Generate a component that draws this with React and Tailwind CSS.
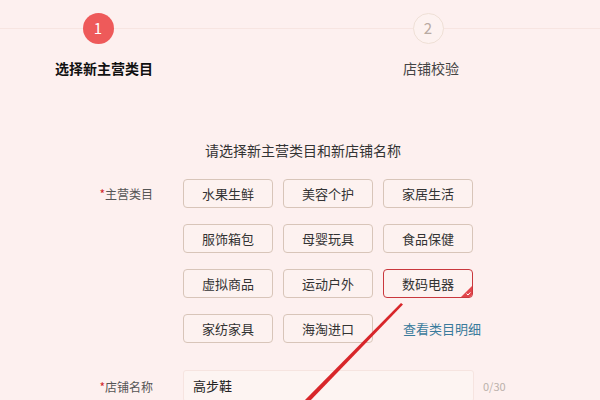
const categories = [
  "水果生鲜",
  "美容个护",
  "家居生活",
  "服饰箱包",
  "母婴玩具",
  "食品保健",
  "虚拟商品",
  "运动户外",
  "数码电器",
  "家纺家具",
  "海淘进口",
];

const CategoryButton = ({ label, selected }) => (
  <div
    className={
      selected
        ? "relative flex h-[29px] items-center justify-center rounded-[4px] border border-[#c9383d] bg-[#fdf2f0] text-[13px] text-[#333]"
        : "relative flex h-[29px] items-center justify-center rounded-[4px] border border-[#d8c5b9] bg-[#fdf2f0] text-[13px] text-[#333]"
    }
  >
    {label}
    {selected ? (
      <svg className="absolute bottom-0 right-0" width="11" height="11" viewBox="0 0 11 11">
        <path d="M11 0 L11 8 Q11 11 8 11 L0 11 Z" fill="#e2454b" />
        <path d="M5.5 7.6 L7 9 L9.4 6.4" stroke="#fff" strokeWidth="1" fill="none" />
      </svg>
    ) : null}
  </div>
);

const FieldLabel = ({ children }) => (
  <div className="w-[153px] shrink-0 text-right text-[12px] leading-[29px] text-[#555]">
    <span className="text-[#d0262c]">*</span>
    {children}
  </div>
);

export default function App() {
  return (
    <div
      className="relative h-[400px] w-[600px] overflow-hidden bg-[#fdf0ef]"
      style={{ fontFamily: '"Noto Sans CJK SC", "Noto Sans", sans-serif' }}
    >
      {/* steps */}
      <div className="relative">
        <div className="absolute left-0 right-0 top-[28px] h-px bg-[#f7e5e1]" />
        <div className="relative flex">
          <div className="ml-[38px] flex w-[120px] flex-col items-center pt-[13px]">
            <div className="flex h-[31px] w-[31px] items-center justify-center rounded-full bg-[#ee5a5a] text-[15px] text-white">
              1
            </div>
            <div className="ml-[12px] mt-[14px] whitespace-nowrap text-[14px] font-bold leading-[20px] text-[#111]">选择新主营类目</div>
          </div>
          <div className="ml-[210px] flex w-[120px] flex-col items-center pt-[13px]">
            <div className="flex h-[31px] w-[31px] items-center justify-center rounded-full border border-[#efe0d6] bg-[#fdf2f0] text-[15px] text-[#b9aaa2]">
              2
            </div>
            <div className="ml-[6px] mt-[14px] whitespace-nowrap text-[14px] leading-[20px] text-[#444]">店铺校验</div>
          </div>
        </div>
      </div>

      <div className="mt-[62px] pl-[205px] text-[14px] leading-[20px] text-[#333]">请选择新主营类目和新店铺名称</div>

      {/* category form */}
      <div className="mt-[19px] flex">
        <FieldLabel>主营类目</FieldLabel>
        <div className="ml-[30px] grid w-[290px] grid-cols-3 gap-x-[10px] gap-y-[16px]">
          {categories.map((c) => (
            <CategoryButton key={c} label={c} selected={c === "数码电器"} />
          ))}
          <div className="whitespace-nowrap pl-[20px] text-[13px] leading-[29px] text-[#3a7b9c]">查看类目明细</div>
        </div>
      </div>

      {/* store name */}
      <div className="mt-[27px] flex items-center">
        <FieldLabel>店铺名称</FieldLabel>
        <div className="ml-[30px] flex h-[32px] w-[291px] items-center rounded-[3px] border border-[#f6e4e0] bg-[#fdf4f2] px-[9px] text-[13px] text-[#222]">
          高步鞋
        </div>
        <div className="ml-[9px] text-[11px] text-[#bbb0ab]">0/30</div>
      </div>

      {/* annotation arrow */}
      <svg className="pointer-events-none absolute left-0 top-0" width="600" height="400" viewBox="0 0 600 400">
        <polygon points="401,303 403,304.5 309,402 303,402" fill="#d8262a" />
      </svg>
    </div>
  );
}
